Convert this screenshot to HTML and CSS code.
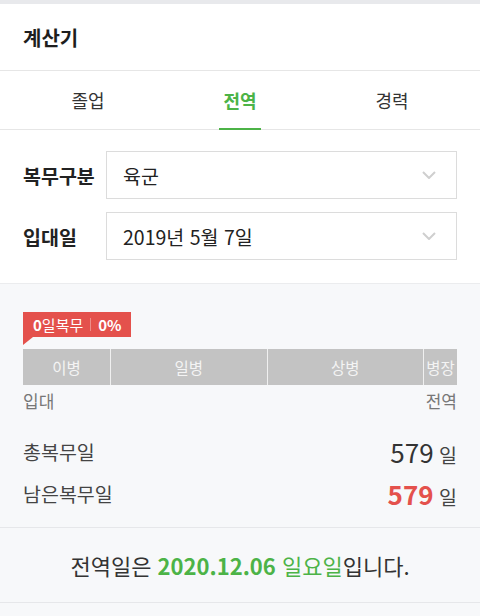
FILE: index.html
```html
<!DOCTYPE html>
<html lang="ko">
<head>
<meta charset="utf-8">
<title>계산기</title>
<link rel="stylesheet" href="styles.css">
</head>
<body>
<div class="topbar"></div>
<header class="header">계산기</header>
<nav class="tabs">
  <div class="tab">졸업</div>
  <div class="tab active">전역</div>
  <div class="tab">경력</div>
</nav>
<section class="form">
  <div class="row">
    <div class="label">복무구분</div>
    <div class="select">
      <span>육군</span>
      <svg class="chev" width="14" height="8" viewBox="0 0 14 8"><polyline points="1,1 7,7 13,1" fill="none" stroke="#cfcfcf" stroke-width="2"/></svg>
    </div>
  </div>
  <div class="row">
    <div class="label">입대일</div>
    <div class="select">
      <span>2019년 5월 7일</span>
      <svg class="chev" width="14" height="8" viewBox="0 0 14 8"><polyline points="1,1 7,7 13,1" fill="none" stroke="#cfcfcf" stroke-width="2"/></svg>
    </div>
  </div>
</section>
<section class="progress">
  <div class="badge-wrap">
    <div class="badge"><b>0</b>일복무<span class="sep"></span><b>0%</b></div>
  </div>
  <div class="bar">
    <div class="seg" style="flex: 87">이병</div>
    <div class="seg" style="flex: 155">일병</div>
    <div class="seg" style="flex: 155">상병</div>
    <div class="seg" style="flex: 33">병장</div>
  </div>
  <div class="ends"><span>입대</span><span>전역</span></div>
  <div class="stat"><span class="k">총복무일</span><span class="v"><em class="num">579</em> 일</span></div>
  <div class="stat"><span class="k">남은복무일</span><span class="v"><em class="num red">579</em> 일</span></div>
</section>
<section class="result">
  <p>전역일은 <strong class="green">2020.12.06</strong> <span class="green">일요일</span>입니다.</p>
</section>
</body>
</html>
```
FILE: styles.css
```css
* { box-sizing: border-box; }
html, body { margin: 0; padding: 0; }
body {
  width: 480px;
  min-height: 616px;
  background: #f7f8fa;
  font-family: "Noto Sans CJK KR", "Noto Sans", sans-serif;
  color: #333;
}
.topbar { height: 4px; background: #e8e9ec; }
.header {
  height: 67px;
  background: #fff;
  display: flex;
  align-items: center;
  padding-left: 23px;
  font-size: 20px;
  font-weight: 700;
  color: #1e1e1e;
  border-bottom: 1px solid #e6e6e6;
}
.tabs {
  height: 59px;
  background: #fff;
  display: flex;
  padding: 0 12px;
  border-bottom: 1px solid #e6e6e6;
}
.tab {
  flex: 1;
  display: flex;
  align-items: center;
  justify-content: center;
  font-size: 18px;
  color: #333;
  position: relative;
}
.tab.active { color: #4cb347; font-weight: 700; }
.tab.active::after {
  content: "";
  position: absolute;
  left: 50%;
  bottom: -1px;
  width: 42px;
  margin-left: -21px;
  height: 2px;
  background: #4cb347;
}
.form {
  background: #fff;
  padding: 21px 23px 23px 23px;
  display: flex;
  flex-direction: column;
  gap: 13px;
  border-bottom: 1px solid #ebecee;
}
.row { display: flex; align-items: center; }
.label {
  width: 83px;
  font-size: 19.5px;
  font-weight: 700;
  color: #222;
  white-space: nowrap;
}
.select {
  flex: 1;
  height: 48px;
  border: 1px solid #dcdcdc;
  display: flex;
  align-items: center;
  justify-content: space-between;
  padding: 0 20px 0 16px;
  font-size: 19.5px;
  color: #222;
}
.chev { display: block; }
.progress { padding: 28px 23px 13px 23px; }
.badge-wrap { margin-bottom: 12px; }
.badge {
  position: relative;
  display: inline-flex;
  align-items: center;
  height: 25px;
  padding: 0 9px 0 10px;
  background: #e4514c;
  color: #fff;
  font-size: 15px;
}
.badge b { font-weight: 700; }
.badge::after {
  content: "";
  position: absolute;
  left: 0;
  top: 25px;
  border-top: 8px solid #e4514c;
  border-right: 10px solid transparent;
}
.sep {
  display: inline-block;
  width: 1px;
  height: 13px;
  background: rgba(255,255,255,0.35);
  margin: 0 7px;
}
.bar {
  display: flex;
  height: 36px;
  gap: 1px;
  background: #f0f0f0;
}
.seg {
  background: #c3c3c3;
  color: #f4f4f4;
  font-size: 15.5px;
  display: flex;
  align-items: center;
  justify-content: center;
  white-space: nowrap;
  overflow: hidden;
}
.ends {
  display: flex;
  justify-content: space-between;
  font-size: 17px;
  color: #777;
  line-height: 22px;
  margin-top: 5px;
  margin-bottom: 18px;
}
.stat {
  height: 42px;
  display: flex;
  align-items: center;
  justify-content: space-between;
  font-size: 19.5px;
  color: #444;
}
.v { font-size: 19.5px; color: #444; }
.num {
  font-style: normal;
  font-size: 26px;
  color: #333;
}
.num.red { color: #e4514c; font-weight: 700; }
.result {
  height: 76px;
  border-top: 1px solid #e6e7ea;
  border-bottom: 1px solid #e6e7ea;
  display: flex;
  align-items: center;
  justify-content: center;
}
.result p { margin: 0; font-size: 22px; color: #333; }
.green { color: #4cb347; }
strong.green { font-weight: 700; }
```
